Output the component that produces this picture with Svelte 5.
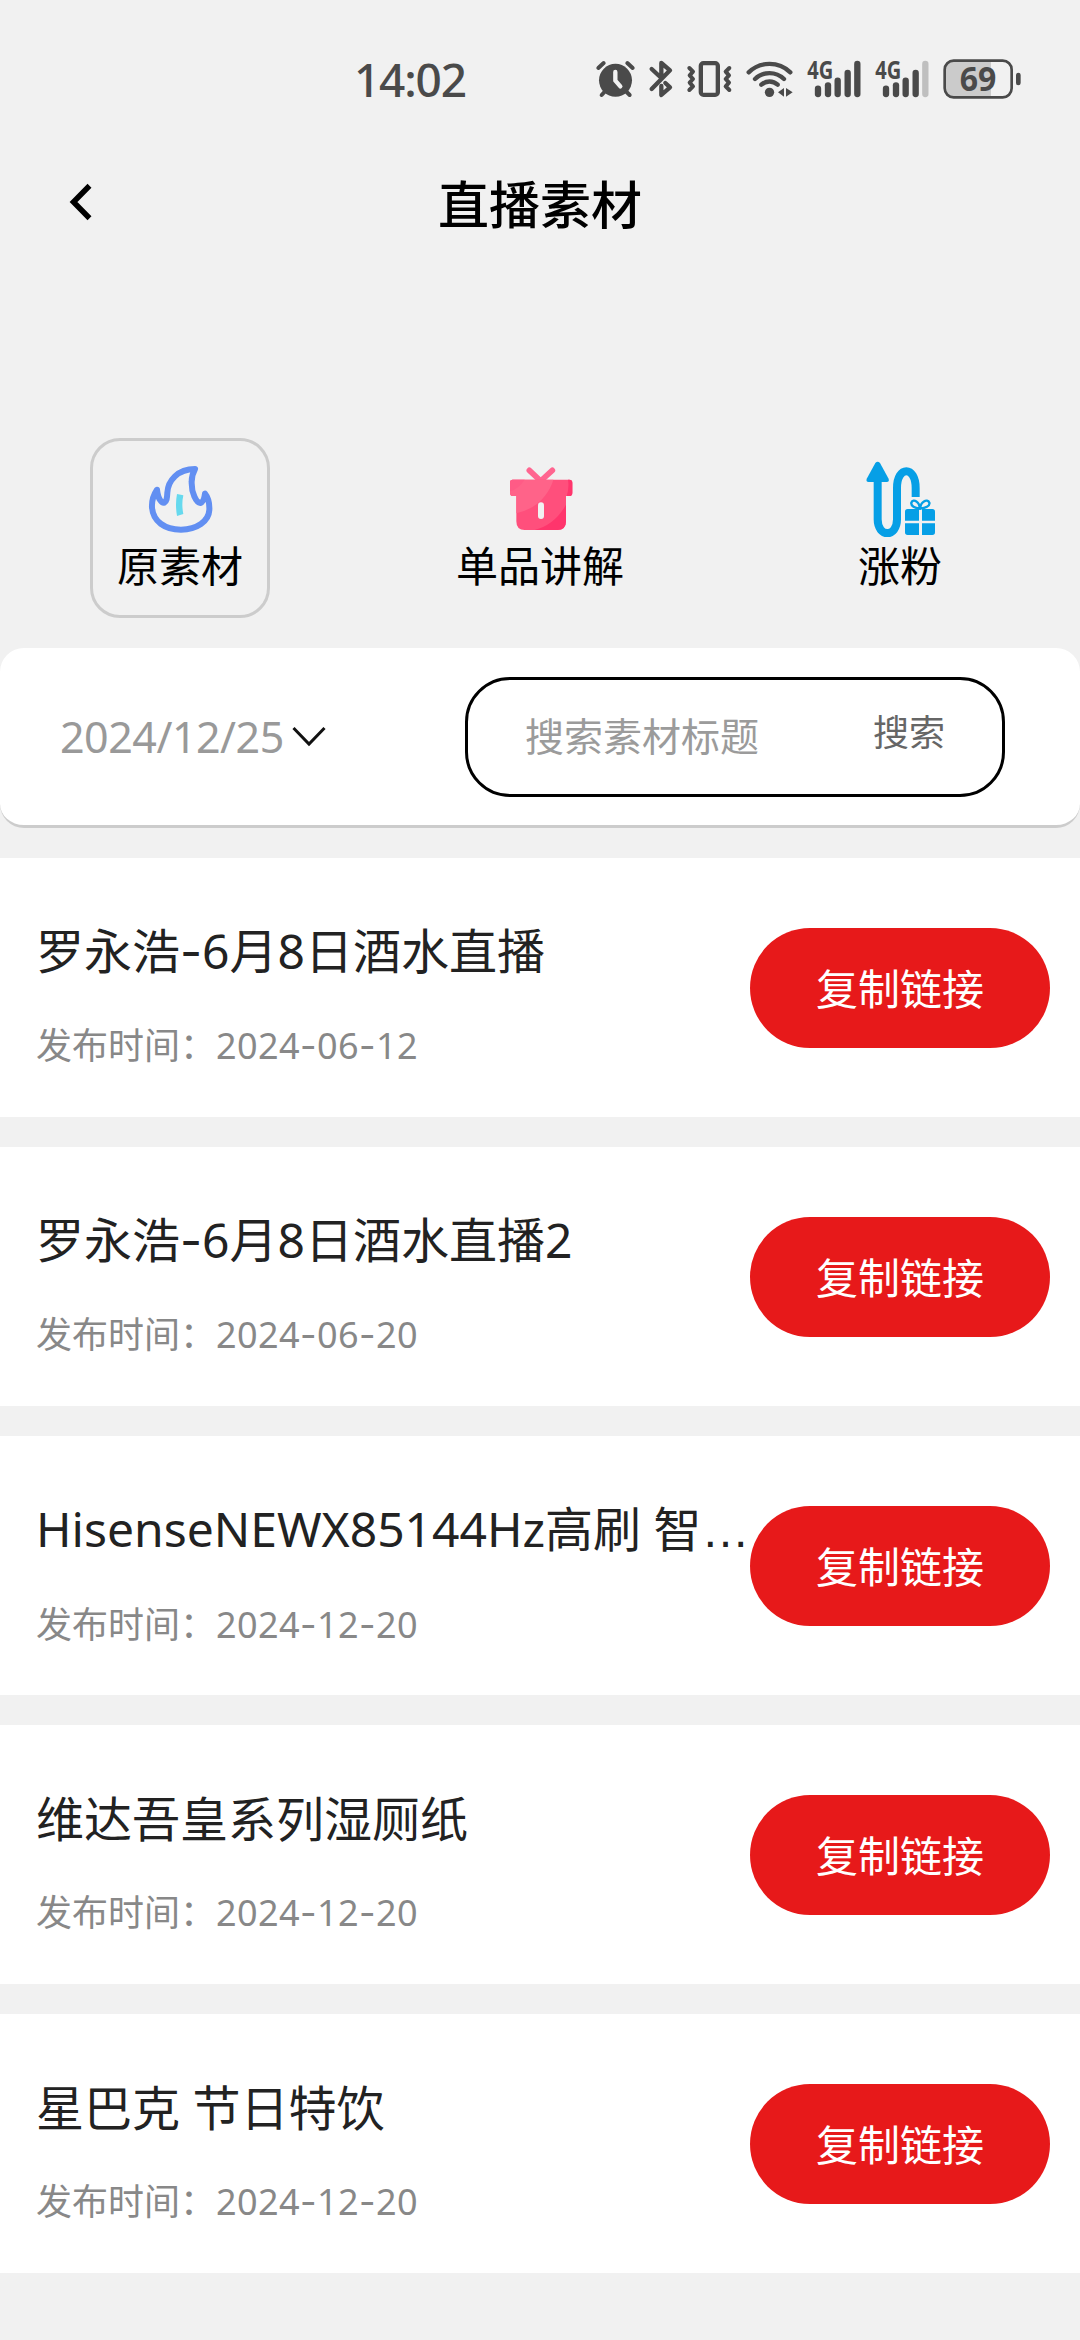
<script lang="ts">
  type Tab = "raw" | "single" | "fans";

  const TABS: { key: Tab; label: string }[] = [
    { key: "raw", label: "原素材" },
    { key: "single", label: "单品讲解" },
    { key: "fans", label: "涨粉" },
  ];

  const ITEMS = [
    { title: "罗永浩-6月8日酒水直播", date: "2024-06-12" },
    { title: "罗永浩-6月8日酒水直播2", date: "2024-06-20" },
    { title: "HisenseNEWX85144Hz高刷 智…", date: "2024-12-20" },
    { title: "维达吾皇系列湿厕纸", date: "2024-12-20" },
    { title: "星巴克 节日特饮", date: "2024-12-20" },
  ];

  // x centre and top of each signal bar
  const BARS = [
    [54, 146],
    [84, 136],
    [113, 122],
    [143, 99],
    [172, 72],
  ];

  let active = $state<Tab>("raw");
</script>

<!-- hyphens and ellipses are set in wider faces than the rest of the line -->
{#snippet text(value: string)}
  {#each value.split(/([-…])/) as part}{#if part === "-"}<span class="dash">-</span>{:else if part === "…"}<span class="dots">…</span>{:else}{part}{/if}{/each}
{/snippet}

{#snippet signal(level: number)}
  <svg width="68" height="44" viewBox="6 54 204 132">
    <text class="net" x="22" y="116" textLength="78" lengthAdjust="spacingAndGlyphs">4G</text>
    {#each BARS as [x, top], i}
      <path
        d="M{x} {top}V162"
        stroke={i < level ? "#4a4a4a" : "#bfbfbf"}
        stroke-width="19"
        stroke-linecap="round"
      />
    {/each}
  </svg>
{/snippet}

<div class="page">
  <div class="status-bar">
    <span class="time">14:02</span>
    <div class="status-icons">
      <!-- alarm -->
      <svg width="50" height="44" viewBox="45 54 150 132" fill="none" stroke-linecap="round" stroke-linejoin="round">
        <circle cx="106.500" cy="121" r="49.500" fill="#4a4a4a" />
        <path d="M55 84L71 69M142 69L158 84" stroke="#4a4a4a" stroke-width="12" />
        <path d="M76 153L65 165M137 153L149 165" stroke="#4a4a4a" stroke-width="12" />
        <path d="M106 96V122L121 139" stroke="#f1f1f1" stroke-width="13" />
      </svg>
      <!-- bluetooth -->
      <svg width="37" height="44" viewBox="195 54 111 132" fill="none" stroke="#4a4a4a" stroke-width="13" stroke-linecap="round" stroke-linejoin="round">
        <path d="M215 87L244 114V69L270 91L215 147" />
        <path d="M256 129L270 142L244 165V138" />
      </svg>
      <!-- vibrate -->
      <svg width="60" height="44" viewBox="306 54 180 132" fill="none" stroke="#4a4a4a" stroke-linecap="round" stroke-linejoin="round">
        <rect x="362.500" y="69.500" width="51" height="95" rx="8" stroke-width="13" />
        <path d="M328 84L339 95L329 106L339 117L329 128L339 139L328 150" stroke-width="12" />
        <path d="M448 84L437 95L447 106L437 117L447 128L437 139L448 150" stroke-width="12" />
      </svg>
      <!-- wifi -->
      <svg width="60" height="44" viewBox="486 54 180 132" fill="none" stroke="#4a4a4a" stroke-width="13" stroke-linecap="round">
        <path d="M506 97A90 90 0 0 1 631 97" />
        <path d="M525 117A62 62 0 0 1 612 117" />
        <path d="M544 134A36 36 0 0 1 593 134" />
        <circle cx="568.500" cy="157" r="14" fill="#4a4a4a" stroke="none" />
        <path d="M594 157L612 144V170ZM618 144L638 157L618 170Z" fill="#4a4a4a" stroke="none" />
      </svg>
      {@render signal(5)}
      {@render signal(4)}
      <!-- battery -->
      <svg width="87" height="44" viewBox="414 54 261 132">
        <path d="M462 62H573V172H462Q434 172 434 144V90Q434 62 462 62Z" fill="#cbcbcb" />
        <rect x="434" y="62" width="201" height="110" rx="27" fill="none" stroke="#4a4a4a" stroke-width="8" />
        <rect x="648" y="98" width="14" height="38" rx="7" fill="#4a4a4a" />
        <text class="level" x="479" y="152" textLength="110" lengthAdjust="spacingAndGlyphs">69</text>
      </svg>
    </div>
  </div>

  <header class="nav">
    <button class="back" type="button" aria-label="返回">
      <svg width="24" height="36" viewBox="0 0 24 36" fill="none" stroke="#000" stroke-width="5.500">
        <path d="M20.500 1.800L4.500 18L20.500 34.200" />
      </svg>
    </button>
    <h1>直播素材</h1>
  </header>

  <nav class="tabs">
    {#each TABS as tab (tab.key)}
      <button
        type="button"
        class="tab"
        class:active={active === tab.key}
        onclick={() => (active = tab.key)}
      >
        <svg width="80" height="80" viewBox="180 90 240 240" fill="none">
          {#if tab.key === "raw"}
            <path
              d="M345 117C293 117 264 152 262 188C261 207 260 214 253 218C246 220 234 209 231 179C219 197 215 214 216 232C219 274 254 299 303 299C351 298 386 274 388 240C389 218 384 202 375 191C373 206 369 217 361 219C349 218 334 190 335 155C335 139 339 128 345 117Z"
              stroke="#628ff2"
              stroke-width="18"
              stroke-linejoin="round"
            />
            <path d="M291 192L310 196Q304 223 310 252L291 258Q285 223 291 192Z" fill="#66d9ee" />
          {:else if tab.key === "single"}
            <path d="M268 121L302 153L337 121" stroke="#ff6590" stroke-width="17" stroke-linecap="round" stroke-linejoin="round" />
            <path
              d="M218 149H388Q397 149 397 158V188Q397 198 388 198H378V274Q378 300 352 300H254Q229 300 229 274V198H219Q210 198 210 188V158Q210 149 218 149Z"
              fill="#ff4f7c"
            />
            <path d="M218 149H340Q333 174 315 197Q285 237 229 250V198H219Q210 198 210 188V158Q210 149 218 149Z" fill="#ff6389" />
            <path d="M210 184Q236 176 254 149H218Q210 149 210 158Z" fill="#ff5b86" />
            <path d="M378 224V274Q378 300 352 300H284Q345 284 378 224ZM384 149H388Q397 149 397 158V188Q397 198 388 198H380Q388 175 384 149Z" fill="#ff356c" />
            <path d="M303 226V258" stroke="#f1f1f1" stroke-width="18" stroke-linecap="round" />
          {:else}
            <path d="M233 145V268C233 323 291 323 291 268V174C291 107 347 107 347 174V201" stroke="#069fe6" stroke-width="24" />
            <path d="M226 99Q233 92 240 99L265 145Q270 156 260 156H206Q196 156 201 145Z" fill="#069fe6" />
            <path d="M323 237H357V272H315V245Q315 237 323 237ZM366 237H397Q405 237 405 245V272H366ZM315 280H357V315H323Q315 315 315 307ZM366 280H405V307Q405 315 397 315H366Z" fill="#069fe6" />
            <path d="M359 236C345 234 332 228 334 218C340 204 360 216 359 236ZM361 236C375 234 391 228 388 218C382 204 360 216 361 236Z" stroke="#069fe6" stroke-width="7" />
          {/if}
        </svg>
        <span>{tab.label}</span>
      </button>
    {/each}
  </nav>

  <section class="filter">
    <button class="date" type="button">
      <span>2024/12/25</span>
      <svg width="34" height="22" viewBox="0 0 34 22" fill="none" stroke="#111" stroke-width="3">
        <path d="M1.500 2L17 18L32.500 2" />
      </svg>
    </button>
    <div class="search">
      <span class="placeholder">搜索素材标题</span>
      <button type="button">搜索</button>
    </div>
  </section>

  <ul class="list">
    {#each ITEMS as item}
      <li>
        <div class="info">
          <div class="title">{@render text(item.title)}</div>
          <div class="meta">发布时间：<span class="published">{@render text(item.date)}</span></div>
        </div>
        <button class="copy" type="button">复制链接</button>
      </li>
    {/each}
  </ul>
</div>

<style>
  :global(body) {
    margin: 0;
    background: #f1f1f1;
  }
  .page {
    width: 1080px;
    height: 2340px;
    overflow: hidden;
    background: #f1f1f1;
    font-family: "Noto Sans", "Noto Sans CJK SC", sans-serif;
    color: #000;
  }
  button {
    margin: 0;
    padding: 0;
    border: 0;
    background: none;
    font: inherit;
    color: inherit;
    white-space: nowrap;
  }
  svg {
    display: block;
    flex-shrink: 0;
    overflow: visible;
  }
  .dash {
    font-family: Inter, sans-serif;
  }
  .dots {
    font-family: "Liberation Sans", sans-serif;
  }

  .status-bar {
    display: flex;
    align-items: center;
    justify-content: space-between;
    height: 160px;
    padding: 0 55px 0 354px;
    box-sizing: border-box;
  }
  .time {
    padding-bottom: 3px;
    font-size: 46px;
    line-height: 60px;
    font-weight: 500;
    letter-spacing: -1.2px;
    color: #4a4a4a;
  }
  .status-icons {
    display: flex;
  }
  .net,
  .level {
    font-family: "Noto Sans", sans-serif;
    font-weight: 700;
    fill: #4a4a4a;
  }
  .net {
    font-size: 74px;
  }
  .level {
    font-size: 100px;
  }

  .nav {
    display: grid;
    grid-template-columns: 140px 1fr 140px;
    align-items: center;
    height: 88px;
  }
  .back {
    padding: 0 0 4px 69px;
  }
  h1 {
    margin: 0;
    text-align: center;
    font-size: 51px;
    line-height: 76px;
    font-weight: 500;
  }

  .tabs {
    display: grid;
    grid-template-columns: repeat(3, 1fr);
    justify-items: center;
    margin-top: 190px;
  }
  .tab {
    display: flex;
    flex-direction: column;
    align-items: center;
    width: 180px;
    height: 180px;
    padding-top: 19px;
    box-sizing: border-box;
    border: 3px solid transparent;
    border-radius: 30px;
    font-size: 42px;
    line-height: 52px;
  }
  .tab.active {
    border-color: #ccc;
  }

  .filter {
    display: flex;
    align-items: center;
    justify-content: space-between;
    height: 180px;
    margin-top: 30px;
    padding: 0 75px 0 60px;
    box-sizing: border-box;
    background: #fff;
    border-bottom: 3px solid #ccc;
    border-radius: 24px;
  }
  .date {
    display: flex;
    align-items: center;
    gap: 8px;
    font-size: 43px;
    letter-spacing: -0.5px;
    color: #999;
  }
  .search {
    display: flex;
    align-items: center;
    justify-content: space-between;
    width: 540px;
    height: 120px;
    padding: 0 57px;
    box-sizing: border-box;
    border: 3px solid #000;
    border-radius: 45px;
  }
  .placeholder {
    padding-bottom: 5px;
    font-size: 39px;
    color: #9b9b9b;
  }
  .search button {
    padding-bottom: 12px;
    font-size: 36px;
    color: #666;
  }

  .list {
    display: flex;
    flex-direction: column;
    gap: 30px;
    margin: 30px 0 0;
    padding: 0;
    list-style: none;
  }
  .list li {
    display: flex;
    align-items: center;
    height: 259px;
    padding: 0 30px 0 36px;
    box-sizing: border-box;
    background: #fff;
  }
  .info {
    flex: 1;
    min-width: 0;
    padding-top: 12px;
  }
  .title {
    overflow: hidden;
    white-space: nowrap;
    font-size: 48px;
    line-height: 72px;
    color: #222;
  }
  .meta {
    margin-top: 32px;
    font-size: 36px;
    line-height: 52px;
    color: #888;
  }
  .published {
    letter-spacing: 0.4px;
  }
  .copy {
    flex-shrink: 0;
    width: 300px;
    height: 120px;
    padding-bottom: 3px;
    border-radius: 60px;
    background: #e7191a;
    color: #fff;
    font-size: 42px;
  }
</style>
